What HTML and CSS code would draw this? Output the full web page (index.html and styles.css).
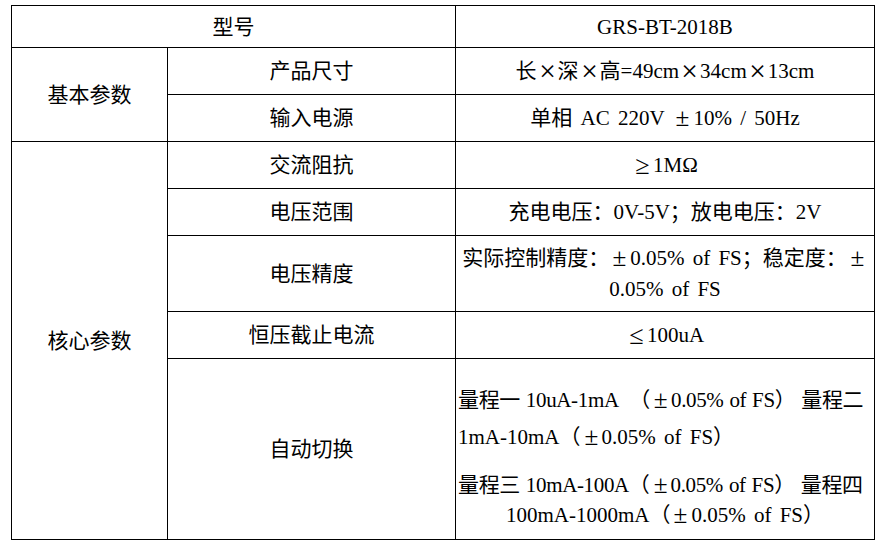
FILE: index.html
```html
<!DOCTYPE html>
<html lang="zh-CN">
<head>
<meta charset="utf-8">
<title>GRS-BT-2018B 参数</title>
<link rel="stylesheet" href="styles.css">
</head>
<body>
<div class="page">
<table class="spec">
  <colgroup>
    <col class="c1">
    <col class="c2">
    <col class="c3">
  </colgroup>
  <tr class="r-head">
    <td colspan="2">型号</td>
    <td>GRS-BT-2018B</td>
  </tr>
  <tr class="r-std">
    <td rowspan="2">基本参数</td>
    <td>产品尺寸</td>
    <td>长<span class="fw x">×</span>深<span class="fw x">×</span>高=49cm<span class="fw x">×</span>34cm<span class="fw x">×</span>13cm</td>
  </tr>
  <tr class="r-std">
    <td>输入电源</td>
    <td>单相 AC 220V <span class="fw pm">±</span>10% / 50Hz</td>
  </tr>
  <tr class="r-std">
    <td rowspan="5" class="core">核心参数</td>
    <td>交流阻抗</td>
    <td><span class="fw cmp">≥</span>1MΩ</td>
  </tr>
  <tr class="r-std">
    <td>电压范围</td>
    <td>充电电压：0V-5V；放电电压：2V</td>
  </tr>
  <tr class="r-two">
    <td>电压精度</td>
    <td class="two">实际控制精度：<span class="fw pm">±</span>0.05% of FS；稳定度：<span class="fw pm">±</span><br>0.05% of FS</td>
  </tr>
  <tr class="r-std">
    <td>恒压截止电流</td>
    <td><span class="fw cmp">≤</span>100uA</td>
  </tr>
  <tr class="r-big">
    <td>自动切换</td>
    <td class="ranges">
      <div class="p1">
        <div class="ln tight">量程一 10uA-1mA  （<span class="fw pm">±</span>0.05% of FS） 量程二</div>
        <div class="ln">1mA-10mA（<span class="fw pm">±</span>0.05% of FS）</div>
      </div>
      <div class="p2">
        <div class="ln tight">量程三 10mA-100A（<span class="fw pm">±</span>0.05% of FS） 量程四</div>
        <div class="ln center">100mA-1000mA（<span class="fw pm">±</span>0.05% of FS）</div>
      </div>
    </td>
  </tr>
</table>
</div>
</body>
</html>
```
FILE: styles.css
```css
html, body {
  margin: 0;
  padding: 0;
  background: #ffffff;
}

.page {
  padding: 5px 0 0 11px;
}

.spec {
  border-collapse: collapse;
  table-layout: fixed;
  width: 863px;
  font-family: "Liberation Serif", "Noto Sans CJK SC", serif;
  font-size: 21px;
  color: #000000;
  word-spacing: 3px;
}

.c1 { width: 156px; }
.c2 { width: 288px; }
.c3 { width: 419px; }

.spec td {
  border: 1px solid #000000;
  text-align: center;
  vertical-align: middle;
  padding: 0 3px;
  white-space: nowrap;
  line-height: 28px;
}

.r-head td { height: 41px; }
.r-std td { height: 46px; }
.r-two td { height: 75px; }
.r-big td { height: 180px; }

.fw {
  display: inline-block;
  width: 1em;
  text-align: center;
  word-spacing: 0;
}

.fw.x { transform: scale(1.4); }
.fw.pm { transform: scale(1.2, 1.15); }
.fw.cmp { transform: scale(1.25); }

.spec td.two {
  line-height: 31px;
}

.spec td.ranges {
  vertical-align: top;
  text-align: left;
  padding: 23px 2px 0 2px;
  height: 157px;
}

.ln {
  white-space: pre;
}

.ln.tight {
  letter-spacing: -0.35px;
  word-spacing: 1px;
}

.p1 .ln {
  line-height: 37px;
  height: 37px;
}

.p2 {
  margin-top: 14px;
}

.p2 .ln {
  line-height: 30px;
  height: 30px;
}

.ln.center {
  text-align: center;
}
```
